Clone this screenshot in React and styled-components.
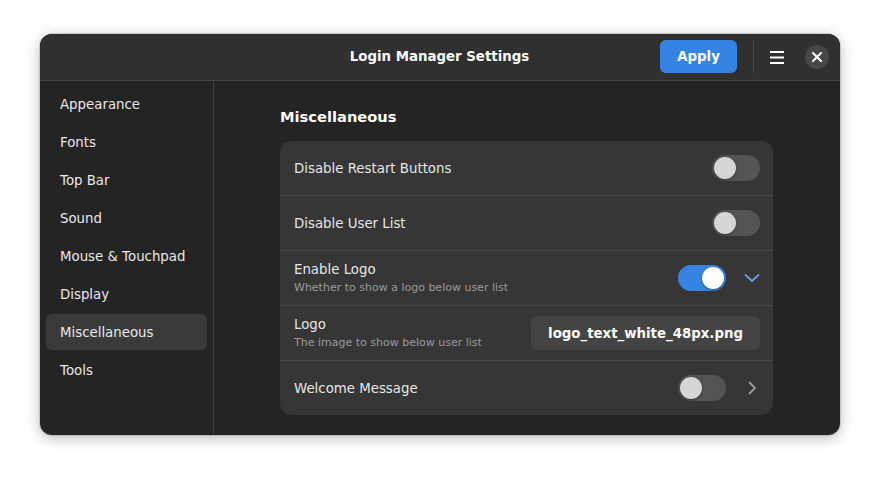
import React from "react";
import styled, { createGlobalStyle } from "styled-components";

const Global = createGlobalStyle`
  html, body { margin: 0; padding: 0; background: #ffffff; }
  body { font-family: "DejaVu Sans", "Liberation Sans", sans-serif; }
  * { box-sizing: border-box; }
`;

const Page = styled.div`
  width: 880px;
  height: 481px;
  padding: 34px 40px 0 40px;
`;

const Window = styled.div`
  width: 800px;
  height: 401px;
  border-radius: 12px;
  overflow: hidden;
  background: #242424;
  display: flex;
  flex-direction: column;
  box-shadow: 0 0 0 1px rgba(0, 0, 0, 0.12), 0 3px 14px rgba(0, 0, 0, 0.28);
`;

const HeaderBar = styled.header`
  height: 47px;
  flex: none;
  background: #303030;
  border-bottom: 1px solid #454545;
  display: grid;
  grid-template-columns: 1fr auto 1fr;
  align-items: center;
  padding: 0 11px 1px 12px;
`;

const Title = styled.div`
  grid-column: 2;
  color: #ffffff;
  font-weight: bold;
  font-size: 13.33px;
  margin-right: 2px;
`;

const HeaderEnd = styled.div`
  grid-column: 3;
  justify-self: end;
  display: flex;
  align-items: center;
`;

const SuggestedButton = styled.button`
  width: 77px;
  height: 33px;
  border: none;
  border-radius: 6px;
  background: #3584e4;
  color: #ffffff;
  font-family: inherit;
  font-weight: bold;
  font-size: 13.33px;
`;

const VSep = styled.div`
  width: 1px;
  height: 33px;
  background: #474747;
  margin: 0 7px 0 16px;
`;

const IconButton = styled.button`
  width: 32px;
  height: 32px;
  border: none;
  background: transparent;
  display: flex;
  align-items: center;
  justify-content: center;
  padding: 0;
  margin-right: 12px;
`;

const CloseButton = styled.button`
  width: 24px;
  height: 24px;
  border: none;
  border-radius: 50%;
  background: #484848;
  display: flex;
  align-items: center;
  justify-content: center;
  padding: 0;
`;

const Body = styled.div`
  flex: 1;
  display: flex;
  min-height: 0;
`;

const Sidebar = styled.nav`
  width: 174px;
  flex: none;
  border-right: 1px solid #3e3e3e;
  padding: 5px 6px;
  display: flex;
  flex-direction: column;
  gap: 2px;
`;

const NavItem = styled.div`
  height: 36px;
  display: flex;
  align-items: center;
  padding-left: 14px;
  border-radius: 6px;
  font-size: 13.33px;
  color: #e8e8e8;
  background: ${(p) => (p.$active ? "#3a3a3a" : "transparent")};
`;

const Content = styled.main`
  flex: 1;
  padding-top: 26px;
`;

const Column = styled.div`
  margin: 0 67px 0 66px;
`;

const SectionTitle = styled.h2`
  margin: 0 0 14px 0;
  font-size: 14.67px;
  line-height: 20px;
  font-weight: bold;
  color: #ffffff;
`;

const Card = styled.div`
  background: #363636;
  border-radius: 12px;
  overflow: hidden;
`;

const Row = styled.div`
  box-sizing: content-box;
  min-height: 54px;
  display: flex;
  align-items: center;
  padding: 0 13px 0 14px;
  & + & {
    border-top: 1px solid #474747;
  }
`;

const Labels = styled.div`
  flex: 1;
  display: flex;
  flex-direction: column;
  gap: 3px;
`;

const RowTitle = styled.div`
  font-size: 13.33px;
  line-height: 17px;
  color: #e6e6e6;
`;

const RowSubtitle = styled.div`
  font-size: 11px;
  line-height: 14px;
  color: #9a9a9a;
`;

const Suffix = styled.div`
  display: flex;
  align-items: center;
  gap: 18px;
`;

const SwitchTrack = styled.div`
  width: 48px;
  height: 26px;
  border-radius: 13px;
  background: ${(p) => (p.$on ? "#3584e4" : "#545454")};
  position: relative;
`;

const SwitchKnob = styled.div`
  position: absolute;
  top: 2px;
  left: ${(p) => (p.$on ? "24px" : "2px")};
  width: 22px;
  height: 22px;
  border-radius: 50%;
  background: ${(p) => (p.$on ? "#ffffff" : "#d6d6d6")};
  box-shadow: 0 1px 3px rgba(0, 0, 0, 0.35);
`;

const ArrowBox = styled.div`
  width: 16px;
  height: 16px;
  display: flex;
  align-items: center;
  justify-content: center;
`;

const FileButton = styled.button`
  height: 34px;
  border: none;
  border-radius: 6px;
  background: #444444;
  color: #ffffff;
  font-family: inherit;
  font-weight: bold;
  font-size: 13.33px;
  padding: 0 17px;
`;

function Switch({ on }) {
  return (
    <SwitchTrack $on={on}>
      <SwitchKnob $on={on} />
    </SwitchTrack>
  );
}

const Hamburger = () => (
  <svg width="16" height="16" viewBox="0 0 16 16">
    <rect x="1" y="2" width="14" height="2" fill="#ffffff" />
    <rect x="1" y="7.5" width="14" height="2" fill="#ffffff" />
    <rect x="1" y="13" width="14" height="2" fill="#ffffff" />
  </svg>
);

const CloseIcon = () => (
  <svg width="10" height="10" viewBox="0 0 10 10">
    <path d="M1 1 L9 9 M9 1 L1 9" stroke="#ffffff" strokeWidth="2" strokeLinecap="square" />
  </svg>
);

const ChevronDown = () => (
  <svg width="16" height="10" viewBox="0 0 16 10">
    <path d="M1 1.5 L8 8 L15 1.5" fill="none" stroke="#6aa4e8" strokeWidth="1.8" />
  </svg>
);

const ChevronRight = () => (
  <svg width="10" height="14" viewBox="0 0 10 14">
    <path d="M2 1 L8 7 L2 13" fill="none" stroke="#9a9a9a" strokeWidth="1.8" />
  </svg>
);

const navItems = [
  "Appearance",
  "Fonts",
  "Top Bar",
  "Sound",
  "Mouse & Touchpad",
  "Display",
  "Miscellaneous",
  "Tools",
];

export default function App() {
  return (
    <>
      <Global />
      <Page>
        <Window>
          <HeaderBar>
            <Title>Login Manager Settings</Title>
            <HeaderEnd>
              <SuggestedButton>Apply</SuggestedButton>
              <VSep />
              <IconButton>
                <Hamburger />
              </IconButton>
              <CloseButton>
                <CloseIcon />
              </CloseButton>
            </HeaderEnd>
          </HeaderBar>
          <Body>
            <Sidebar>
              {navItems.map((n) => (
                <NavItem key={n} $active={n === "Miscellaneous"}>
                  {n}
                </NavItem>
              ))}
            </Sidebar>
            <Content>
              <Column>
                <SectionTitle>Miscellaneous</SectionTitle>
                <Card>
                  <Row>
                    <Labels>
                      <RowTitle>Disable Restart Buttons</RowTitle>
                    </Labels>
                    <Suffix>
                      <Switch on={false} />
                    </Suffix>
                  </Row>
                  <Row>
                    <Labels>
                      <RowTitle>Disable User List</RowTitle>
                    </Labels>
                    <Suffix>
                      <Switch on={false} />
                    </Suffix>
                  </Row>
                  <Row>
                    <Labels>
                      <RowTitle>Enable Logo</RowTitle>
                      <RowSubtitle>Whether to show a logo below user list</RowSubtitle>
                    </Labels>
                    <Suffix>
                      <Switch on={true} />
                      <ArrowBox>
                        <ChevronDown />
                      </ArrowBox>
                    </Suffix>
                  </Row>
                  <Row>
                    <Labels>
                      <RowTitle>Logo</RowTitle>
                      <RowSubtitle>The image to show below user list</RowSubtitle>
                    </Labels>
                    <Suffix>
                      <FileButton>logo_text_white_48px.png</FileButton>
                    </Suffix>
                  </Row>
                  <Row>
                    <Labels>
                      <RowTitle>Welcome Message</RowTitle>
                    </Labels>
                    <Suffix>
                      <Switch on={false} />
                      <ArrowBox>
                        <ChevronRight />
                      </ArrowBox>
                    </Suffix>
                  </Row>
                </Card>
              </Column>
            </Content>
          </Body>
        </Window>
      </Page>
    </>
  );
}
